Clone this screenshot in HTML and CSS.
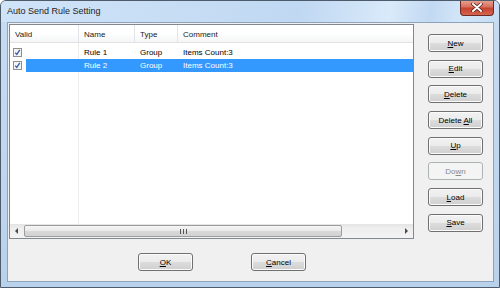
FILE: index.html
```html
<!DOCTYPE html>
<html lang="en">
<head>
    <meta charset="UTF-8">
    <title>Auto Send Rule Setting</title>
    <link rel="stylesheet" href="styles.css">
</head>
<body>
    <div class="window">
        <div class="titlebar">
            <span class="title">Auto Send Rule Setting</span>
            <div class="close">
                <svg width="12" height="9" viewBox="0 0 12 9">
                    <path d="M2 1 L10 8 M10 1 L2 8" stroke="#5a2018" stroke-width="3.6" stroke-linecap="round"/>
                    <path d="M2 1 L10 8 M10 1 L2 8" stroke="#fff" stroke-width="2" stroke-linecap="round"/>
                </svg>
            </div>
        </div>
        <div class="client">
            <div class="main">
                <div class="listview">
                    <div class="header">
                        <div class="hcol c-valid">Valid</div>
                        <div class="hcol c-name">Name</div>
                        <div class="hcol c-type">Type</div>
                        <div class="hcol c-comment">Comment</div>
                    </div>
                    <div class="rows">
                        <div class="row">
                            <div class="check-cell">
                                <svg class="check" width="9" height="9" viewBox="0 0 9 9">
                                    <rect x="0.5" y="0.5" width="8" height="8" fill="#f4f4f4" stroke="#8f8f8f"/>
                                    <path d="M2.2 4.6 L3.8 6.4 L6.8 1.8" fill="none" stroke="#3a5da8" stroke-width="1.3"/>
                                </svg>
                            </div>
                            <div class="row-body">
                                <div class="cell c-spacer"></div>
                                <div class="cell c-name">Rule 1</div>
                                <div class="cell c-type">Group</div>
                                <div class="cell c-comment">Items Count:3</div>
                            </div>
                        </div>
                        <div class="row selected">
                            <div class="check-cell">
                                <svg class="check" width="9" height="9" viewBox="0 0 9 9">
                                    <rect x="0.5" y="0.5" width="8" height="8" fill="#f4f4f4" stroke="#8f8f8f"/>
                                    <path d="M2.2 4.6 L3.8 6.4 L6.8 1.8" fill="none" stroke="#3a5da8" stroke-width="1.3"/>
                                </svg>
                            </div>
                            <div class="row-body">
                                <div class="cell c-spacer"></div>
                                <div class="cell c-name">Rule 2</div>
                                <div class="cell c-type">Group</div>
                                <div class="cell c-comment">Items Count:3</div>
                            </div>
                        </div>
                    </div>
                    <div class="hscroll">
                        <div class="arrow">
                            <svg width="4" height="6" viewBox="0 0 4 6"><path d="M3 0 L0 3 L3 6 Z" fill="#4a4a4a"/></svg>
                        </div>
                        <div class="thumb">
                            <svg width="7" height="5" viewBox="0 0 7 5"><path d="M0.5 0 V5 M3.5 0 V5 M6.5 0 V5" stroke="#555" stroke-width="1"/></svg>
                        </div>
                        <div class="track"></div>
                        <div class="arrow">
                            <svg width="4" height="6" viewBox="0 0 4 6"><path d="M1 0 L4 3 L1 6 Z" fill="#4a4a4a"/></svg>
                        </div>
                    </div>
                </div>
                <div class="side">
                    <button class="btn"><u>N</u>ew</button>
                    <button class="btn"><u>E</u>dit</button>
                    <button class="btn"><u>D</u>elete</button>
                    <button class="btn">Delete <u>A</u>ll</button>
                    <button class="btn"><u>U</u>p</button>
                    <button class="btn" disabled>Do<u>w</u>n</button>
                    <button class="btn"><u>L</u>oad</button>
                    <button class="btn"><u>S</u>ave</button>
                </div>
            </div>
            <div class="footer">
                <button class="btn"><u>O</u>K</button>
                <button class="btn"><u>C</u>ancel</button>
            </div>
        </div>
    </div>
</body>
</html>
```

FILE: styles.css
```css
body {
    margin: 0;
    font-family: "Liberation Sans", Arial, sans-serif;
    font-size: 8px;
    color: #000;
}
.window {
    width: 500px;
    height: 288px;
    box-sizing: border-box;
    border: 1px solid #4d5b6b;
    border-radius: 6px 6px 0 0;
    background: linear-gradient(to bottom, #c6dcf3, #b9d2ec);
    display: flex;
    flex-direction: column;
    overflow: hidden;
}
.titlebar {
    height: 21px;
    flex-shrink: 0;
    display: flex;
    justify-content: space-between;
    align-items: flex-start;
    background: linear-gradient(100deg, #d0e4f8 0%, #c0d8f2 60%, #d9eafa 78%, #c2d9f2 86%, #d3e6f8 92%, #c6dcf3 100%);
}
.title {
    font-size: 9px;
    line-height: 21px;
    padding-left: 6px;
    color: #1e1e1e;
}
.close {
    width: 34px;
    height: 16px;
    margin: -1px 5px 0 0;
    box-sizing: border-box;
    border: 1px solid #6e2b23;
    border-top: none;
    border-radius: 0 0 4px 4px;
    background: linear-gradient(#e8a696, #d9705e 45%, #c6432f 55%, #d66450);
    display: flex;
    align-items: center;
    justify-content: center;
}
.client {
    flex: 1;
    margin: 0 5px 5px 6px;
    border: 1px solid #8da3bb;
    background: #f0f0f0;
    display: flex;
    flex-direction: column;
}
.main {
    display: flex;
    align-items: flex-start;
    padding: 1px 0 0 1px;
}
.listview {
    width: 405px;
    height: 215px;
    box-sizing: border-box;
    border: 1px solid #828790;
    background: #fff;
    display: flex;
    flex-direction: column;
}
.header {
    height: 18px;
    flex-shrink: 0;
    display: flex;
    box-sizing: border-box;
    border-bottom: 1px solid #e2e2e2;
    background: linear-gradient(#fff 50%, #f4f5f7);
}
.hcol {
    padding-left: 5px;
    line-height: 19px;
    box-sizing: border-box;
    border-right: 1px solid #e1e5ea;
    color: #1a1a1a;
}
.c-valid {
    width: 69px;
}
.c-name {
    width: 56px;
}
.c-type {
    width: 43px;
}
.c-comment {
    flex: 1;
    border-right: none;
}
.rows {
    flex: 1;
    padding-top: 3px;
    background: linear-gradient(to right, transparent 68px, #ededed 68px, #ededed 69px, transparent 69px);
}
.row {
    display: flex;
    height: 13px;
    line-height: 13px;
}
.check-cell {
    width: 16px;
    box-sizing: border-box;
    padding-left: 3px;
    display: flex;
    align-items: center;
}
.check {
    display: block;
}
.row-body {
    flex: 1;
    display: flex;
}
.row.selected .row-body {
    background: #3399ff;
    color: #fff;
}
.cell {
    box-sizing: border-box;
    padding-left: 5px;
    white-space: nowrap;
}
.c-spacer {
    width: 53px;
    padding: 0;
}
.hscroll {
    height: 14px;
    flex-shrink: 0;
    display: flex;
    background: linear-gradient(#e4e4e4, #efefef 35%, #f3f3f3);
}
.arrow {
    width: 14px;
    display: flex;
    align-items: center;
    justify-content: center;
}
.thumb {
    width: 318px;
    margin: 1px 0;
    box-sizing: border-box;
    border: 1px solid #9c9c9c;
    border-radius: 2px;
    background: linear-gradient(#f6f6f6, #e9e9e9 50%, #d9d9d9 51%, #d2d2d2);
    display: flex;
    align-items: center;
    justify-content: center;
}
.track {
    flex: 1;
}
.side {
    display: flex;
    flex-direction: column;
    gap: 7.7px;
    margin-left: 14px;
    padding-top: 10px;
}
.btn {
    width: 55px;
    height: 18px;
    box-sizing: border-box;
    padding: 0;
    border: 1px solid #707070;
    border-radius: 3px;
    background: linear-gradient(#f2f2f2 0%, #ebebeb 50%, #dddddd 50%, #cfcfcf 100%);
    box-shadow: inset 0 0 0 1px #fbfbfb;
    font-family: "Liberation Sans", Arial, sans-serif;
    font-size: 8px;
    color: #000;
}
.btn:disabled {
    border-color: #adb2b5;
    background: #f4f4f4;
    box-shadow: none;
    color: #8a8a8a;
}
.footer {
    display: flex;
    gap: 58px;
    padding: 14px 0 0 130px;
}
```
